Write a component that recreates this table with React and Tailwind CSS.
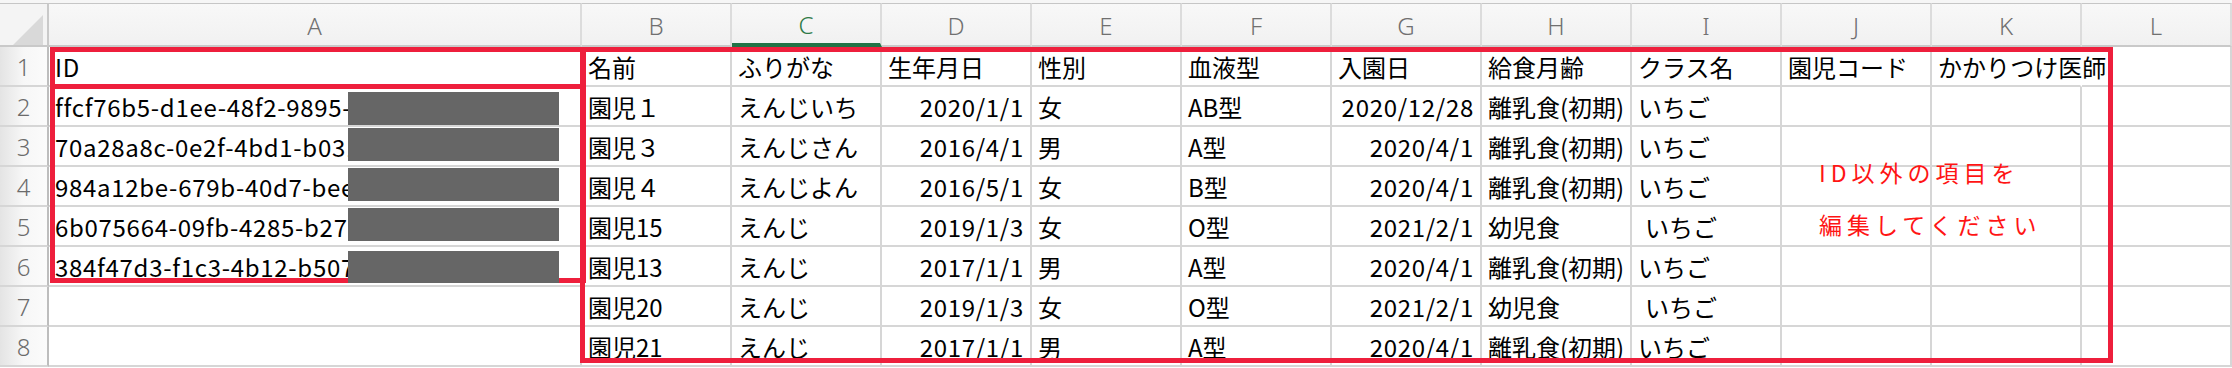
import React from "react";

const COLS = ["A", "B", "C", "D", "E", "F", "G", "H", "I", "J", "K", "L"];

const R = (t) => ({ t, r: true });
const S = (t) => ({ t, s: true });

const ROWS = [
  { a: "ID", c: ["名前", "ふりがな", "生年月日", "性別", "血液型", "入園日", "給食月齢", "クラス名", "園児コード", "かかりつけ医師"] },
  { a: "ffcf76b5-d1ee-48f2-9895-", red: [5, 33], c: ["園児１", "えんじいち", R("2020/1/1"), "女", "AB型", R("2020/12/28"), "離乳食(初期)", "いちご", "", ""] },
  { a: "70a28a8c-0e2f-4bd1-b031", red: [1, 33], c: ["園児３", "えんじさん", R("2016/4/1"), "男", "A型", R("2020/4/1"), "離乳食(初期)", "いちご", "", ""] },
  { a: "984a12be-679b-40d7-bee", red: [1, 33], c: ["園児４", "えんじよん", R("2016/5/1"), "女", "B型", R("2020/4/1"), "離乳食(初期)", "いちご", "", ""] },
  { a: "6b075664-09fb-4285-b271", red: [1, 33], c: ["園児15", "えんじ", R("2019/1/3"), "女", "O型", R("2021/2/1"), "幼児食", S("いちご"), "", ""] },
  { a: "384f47d3-f1c3-4b12-b507", red: [4, 32], c: ["園児13", "えんじ", R("2017/1/1"), "男", "A型", R("2020/4/1"), "離乳食(初期)", "いちご", "", ""] },
  { a: "", c: ["園児20", "えんじ", R("2019/1/3"), "女", "O型", R("2021/2/1"), "幼児食", S("いちご"), "", ""] },
  { a: "", c: ["園児21", "えんじ", R("2017/1/1"), "男", "A型", R("2020/4/1"), "離乳食(初期)", "いちご", "", ""] },
];

function Cell({ v, noRight }) {
  const obj = typeof v === "string" ? { t: v } : v;
  return (
    <div
      className={
        "flex items-center whitespace-nowrap border-b-2 border-r-2 border-[#d6d6d6] px-[6px] pt-[2px] " +
        (obj.r ? "justify-end tracking-[0.7px] " : "") +
        (noRight ? "border-r-transparent " : "")
      }
    >
      <span className={obj.s ? "ml-[7px]" : ""}>{obj.t}</span>
    </div>
  );
}

export default function App() {
  return (
    <div className="relative h-[368px] w-[2232px] overflow-hidden bg-white font-['Noto_Sans_CJK_JP',sans-serif] text-[24px] leading-none text-black">
      <div className="bg-[#f6f6f6] pt-[3px]">
        <div className="grid grid-cols-[49px_533px_repeat(11,150px)] grid-rows-[44px_repeat(8,40px)] bg-white">
          {/* header row */}
          <div className="relative border-b-2 border-r-2 border-t border-b-[#c9c9c9] border-r-[#c9c9c9] border-t-[#c6c6c6] bg-[#f4f4f4]">
            <svg className="absolute left-[13px] top-[11px]" width="30" height="30" viewBox="0 0 30 30">
              <polygon points="30,0 30,30 0,30" fill="#d9d9d9" />
            </svg>
          </div>
          {COLS.map((c) => (
            <div
              key={c}
              className={
                "flex items-center justify-center border-r-2 border-t border-r-[#dcdcdc] border-t-[#c6c6c6] bg-linear-to-b from-[#f8f8f8] to-[#f1f1f1] pt-[2px] font-['Noto_Sans','Liberation_Sans',sans-serif] font-light " +
                (c === "C"
                  ? "border-b-4 border-b-[#217346] bg-[#ececec] text-[#2f7a47]"
                  : "border-b-2 border-b-[#c9c9c9] text-[#707070]")
              }
            >
              {c}
            </div>
          ))}

          {ROWS.map((row, i) => (
            <React.Fragment key={i}>
              <div className="flex items-center justify-center border-b-2 border-r-2 border-b-[#d6d6d6] border-r-[#bdbdbd] bg-linear-to-r from-[#e4e4e4] via-[#f7f7f7] to-[#fbfbfb] pt-[2px] font-['Noto_Sans','Liberation_Sans',sans-serif] font-light text-[#6b6b6b]">
                {i + 1}
              </div>
              <div className="relative flex items-center whitespace-nowrap border-b-2 border-r-2 border-[#d6d6d6] pl-[6px] pt-[2px] tracking-[0.7px]">
                <span>{row.a}</span>
                {row.red && (
                  <div
                    className="absolute left-[299px] z-[2] w-[211px] bg-[#666666]"
                    style={{ top: row.red[0], height: row.red[1] }}
                  />
                )}
              </div>
              {row.c.map((v, j) => (
                <Cell key={j} v={v} noRight={i === 0 && j === 9} />
              ))}
              <div className="border-b-2 border-r-2 border-[#d6d6d6]" />
            </React.Fragment>
          ))}
        </div>
      </div>

      {/* red annotation boxes */}
      <div className="absolute left-[50px] top-[47px] z-[1] h-[236px] w-[536px] border-[5px] border-[#ee1f3c]" />
      <div className="absolute left-[50px] top-[84px] z-[1] h-[5px] w-[536px] bg-[#ee1f3c]" />
      <div className="absolute left-[580px] top-[47px] z-[1] h-[316px] w-[1533px] border-[5px] border-[#ee1f3c]" />

      <div className="absolute left-[1819px] top-[146px] z-[1] text-[23px] leading-[52px] tracking-[5px] text-[#ff1414]">
        <div>ID以外の項目を</div>
        <div>編集してください</div>
      </div>
    </div>
  );
}
